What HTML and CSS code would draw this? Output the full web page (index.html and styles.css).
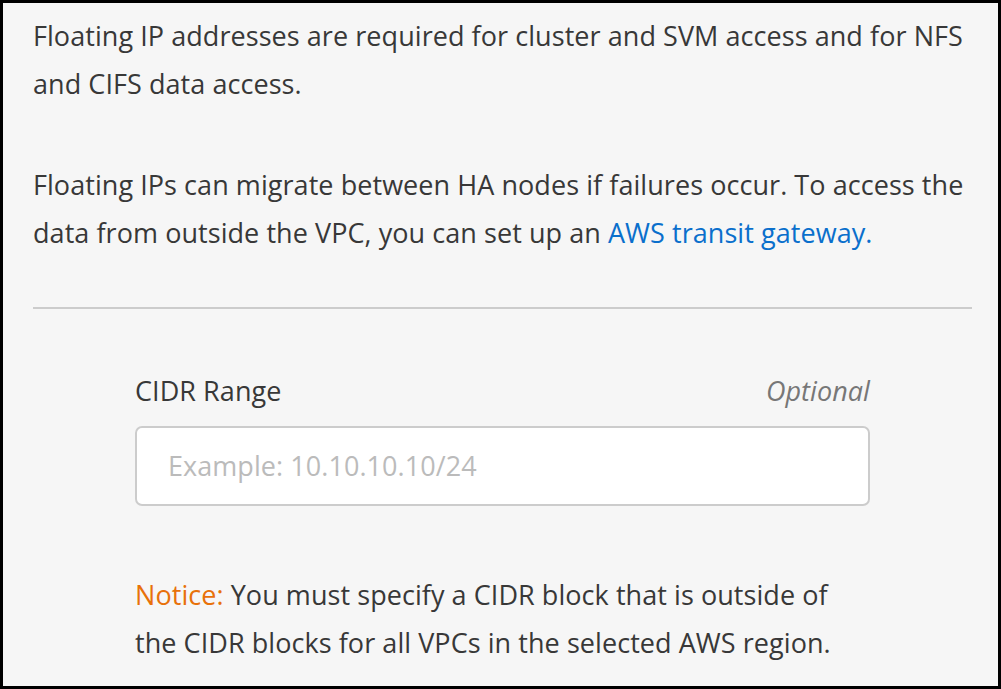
FILE: index.html
```html
<!DOCTYPE html>
<html>
<head>
<meta charset="utf-8">
<link rel="stylesheet" href="styles.css">
</head>
<body>
<div class="frame">
  <p class="para">Floating IP addresses are required for cluster and SVM access and for NFS and CIFS data access.</p>
  <p class="para second">Floating IPs can migrate between HA nodes if failures occur. To access the data from outside the VPC, you can set up an <a class="link" href="#">AWS transit gateway.</a></p>
  <hr class="sep">
  <div class="field">
    <div class="label-row">
      <span class="label">CIDR Range</span>
      <span class="optional">Optional</span>
    </div>
    <div class="input">Example: 10.10.10.10/24</div>
    <p class="notice"><span class="notice-tag">Notice:</span> You must specify a CIDR block that is outside of the CIDR blocks for all VPCs in the selected AWS region.</p>
  </div>
</div>
</body>
</html>
```
FILE: styles.css
```css
html, body {
  margin: 0;
  padding: 0;
}
body {
  font-family: "Open Sans", "Noto Sans", sans-serif;
  font-size: 27px;
  letter-spacing: 0.06px;
  color: #383838;
  background: #ffffff;
}
.frame {
  box-sizing: border-box;
  width: 1001px;
  height: 689px;
  border: 3px solid #000;
  background: #f6f6f6;
  padding: 9px 26px 0 30px;
  overflow: hidden;
}
.para {
  margin: 0;
  line-height: 48px;
}
.second {
  margin-top: 53px;
}
.link {
  color: #0a6fcc;
  text-decoration: none;
}
.sep {
  margin: 50px 0 0 0;
  border: none;
  border-top: 2px solid #cccccc;
  height: 0;
}
.field {
  width: 735px;
  margin: 58px 0 0 102px;
}
.label-row {
  display: flex;
  justify-content: space-between;
  line-height: 48px;
}
.optional {
  font-style: italic;
  color: #777777;
}
.input {
  box-sizing: border-box;
  margin-top: 11px;
  height: 80px;
  background: #ffffff;
  border: 2px solid #cccccc;
  border-radius: 7px;
  padding-left: 31px;
  line-height: 76px;
  color: #bbbbbb;
}
.notice {
  margin: 65px 0 0 0;
  line-height: 48px;
}
.notice-tag {
  color: #e8710a;
}
```
